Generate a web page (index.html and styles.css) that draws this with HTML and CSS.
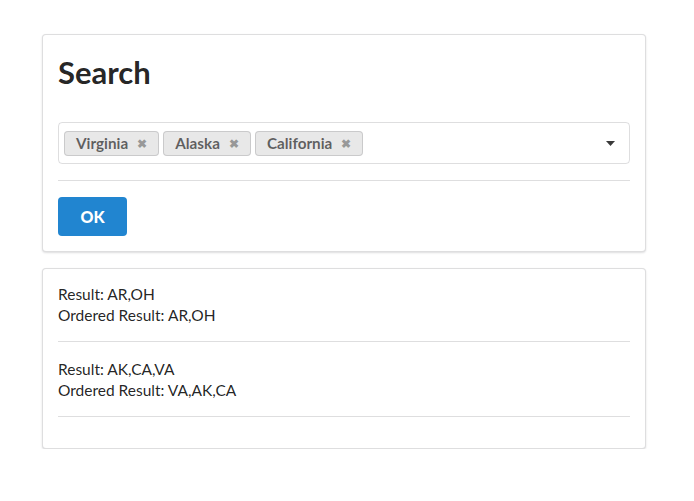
FILE: index.html
```html
<!DOCTYPE html>
<html>
<head>
<meta charset="utf-8">
<link rel="stylesheet" href="styles.css">
</head>
<body>
<div class="page">
  <div class="segment search">
    <h1 class="title">Search</h1>
    <div class="select">
      <div class="tags">
        <span class="tag">Virginia<span class="del">&#x2716;</span></span>
        <span class="tag">Alaska<span class="del">&#x2716;</span></span>
        <span class="tag">California<span class="del">&#x2716;</span></span>
      </div>
      <svg class="caret" width="9" height="5" viewBox="0 0 9 5"><path d="M0 0 L9 0 L4.5 5 Z" fill="#3a3a3a"/></svg>
    </div>
    <div class="divider"></div>
    <button class="ok">OK</button>
  </div>
  <div class="segment results">
    <div class="block">
      <div>Result: AR,OH</div>
      <div>Ordered Result: AR,OH</div>
    </div>
    <div class="divider rdiv"></div>
    <div class="block">
      <div>Result: AK,CA,VA</div>
      <div>Ordered Result: VA,AK,CA</div>
    </div>
    <div class="divider rdiv"></div>
  </div>
</div>
</body>
</html>
```
FILE: styles.css
```css
* { box-sizing: border-box; }
html, body { margin: 0; padding: 0; background: #fff; }
body {
  font-family: Lato, "Helvetica Neue", Arial, sans-serif;
  font-size: 15.5px;
  line-height: 21px;
  color: rgba(0,0,0,.87);
}
.page {
  width: 604px;
  margin-left: 42px;
  padding-top: 34px;
}
.segment {
  border: 1px solid rgba(34,36,38,.15);
  border-radius: 4px;
  box-shadow: 0 1px 2px 0 rgba(34,36,38,.15);
  padding: 15px;
  background: #fff;
}
.title {
  font-size: 31px;
  font-weight: 700;
  line-height: 40px;
  margin: 2px 0 0;
  color: rgba(0,0,0,.87);
}
.select {
  margin-top: 30px;
  border: 1px solid rgba(34,36,38,.15);
  border-radius: 4px;
  height: 42px;
  display: flex;
  align-items: center;
  justify-content: space-between;
  padding: 0 14px 0 5px;
}
.tags { display: flex; gap: 4px; }
.tag {
  display: inline-flex;
  align-items: center;
  height: 25px;
  padding: 0 12px;
  background: #e8e8e8;
  border-radius: 4px;
  box-shadow: inset 0 0 0 1px rgba(34,36,38,.15);
  font-weight: 700;
  font-size: 15.25px;
  color: rgba(0,0,0,.6);
}
.del {
  font-size: 12px;
  margin-left: 9px;
  color: rgba(0,0,0,.35);
}
.caret { display: block; }
.divider {
  border-top: 1px solid rgba(34,36,38,.15);
  margin: 16px 0 16px;
}
.ok {
  display: block;
  background: #2185d0;
  color: #fff;
  border: none;
  border-radius: 4px;
  font-family: Lato, Arial, sans-serif;
  font-weight: 900;
  font-size: 16px;
  width: 69px;
  height: 39px;
  padding: 0;
}
.results {
  margin-top: 16px;
  padding-bottom: 14px;
}
.rdiv { margin: 15px 0 17px; }
```
